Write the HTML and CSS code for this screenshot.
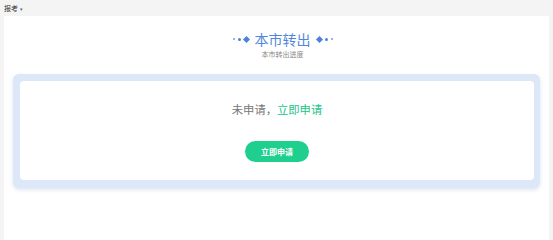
FILE: index.html
```html
<!DOCTYPE html>
<html>
<head>
<meta charset="utf-8">
<link rel="stylesheet" href="styles.css">
</head>
<body>
<div class="topbar"><span class="crumb">报考</span><span class="caret">▾</span></div>
<div class="panel">
  <div class="heading">
    <div class="title-row">
      <span class="dots"><i class="d1"></i><i class="d2"></i><i class="d3"></i></span>
      <span class="title">本市转出</span>
      <span class="dots"><i class="d3"></i><i class="d2"></i><i class="d1"></i></span>
    </div>
    <div class="subtitle">本市转出进度</div>
  </div>
  <div class="card">
    <div class="card-inner">
      <div class="status">未申请，<span class="link">立即申请</span></div>
      <button class="btn">立即申请</button>
    </div>
  </div>
</div>
</body>
</html>
```
FILE: styles.css
```css
html, body {
  margin: 0;
  padding: 0;
  background: #f4f4f4;
  font-family: "Noto Sans CJK SC", "Noto Sans", sans-serif;
}
body {
  min-height: 100vh;
  display: flex;
  flex-direction: column;
}
.topbar {
  height: 16px;
  flex: none;
  display: flex;
  align-items: center;
  padding-left: 4px;
  gap: 2px;
  font-size: 7px;
  color: #333;
}
.caret {
  font-size: 5px;
  color: #666;
}
.panel {
  flex: 1;
  margin-left: 4px;
  margin-right: 4px;
  background: #fff;
  padding: 15px 9px 0 9px;
}
.heading {
  display: flex;
  flex-direction: column;
  align-items: center;
  padding-left: 12px;
}
.title-row {
  display: flex;
  align-items: center;
  gap: 6px;
  height: 16px;
}
.title {
  font-size: 14px;
  color: #5286de;
  line-height: 16px;
}
.dots {
  display: flex;
  align-items: center;
  gap: 3px;
}
.dots i {
  display: block;
  background: #4c82dc;
}
.dots .d1 { width: 2px; height: 2px; border-radius: 50%; opacity: .8; }
.dots .d2 { width: 3px; height: 3px; border-radius: 50%; }
.dots .d3 { width: 5px; height: 5px; transform: rotate(45deg); }
.subtitle {
  font-size: 7px;
  color: #888;
  line-height: 9px;
  margin-top: 3px;
}
.card {
  margin-top: 15px;
  background: #dce7f8;
  border-radius: 6px;
  padding: 7px 6px 8px 7px;
  box-shadow: 0 2px 4px rgba(160,180,210,.35);
}
.card-inner {
  background: #fff;
  border-radius: 4px;
  height: 99px;
  display: flex;
  flex-direction: column;
  align-items: center;
}
.status {
  margin-top: 20px;
  font-size: 11.3px;
  line-height: 16px;
  color: #777;
}
.link {
  color: #22c38a;
}
.btn {
  margin-top: 24px;
  width: 64px;
  height: 21px;
  border: none;
  border-radius: 11px;
  background: #1ecf8e;
  color: #fff;
  font-family: inherit;
  font-size: 8px;
  font-weight: bold;
  padding: 0;
}
```
